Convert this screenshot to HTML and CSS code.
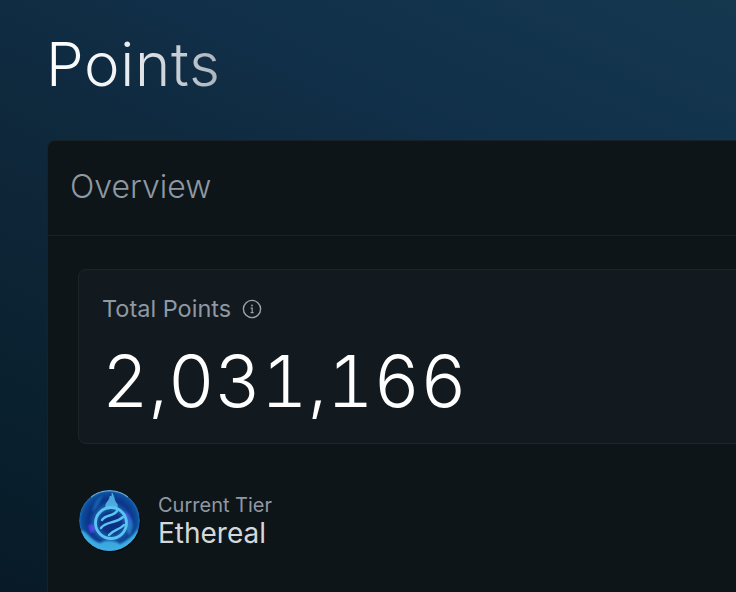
FILE: index.html
```html
<!DOCTYPE html>
<html lang="en">
<head>
<meta charset="utf-8">
<title>Points</title>
<link rel="stylesheet" href="styles.css">
</head>
<body>
<main class="page">
  <h1 class="title">Points</h1>
  <section class="card">
    <header class="card-head">Overview</header>
    <div class="card-body">
      <div class="total">
        <div class="total-label">
          <span>Total Points</span>
          <svg class="info" viewBox="0 0 20 20" width="20" height="20" fill="none" stroke="currentColor" aria-hidden="true">
            <circle cx="10" cy="10" r="8.6" stroke-width="1.4"/>
            <path d="M8.6 9.2H10.2V13.6M8.6 13.7H11.6" stroke-width="1.2"/>
            <circle cx="10" cy="6.5" r="0.9" fill="currentColor" stroke="none"/>
          </svg>
        </div>
        <div class="total-value">2,031,166</div>
      </div>
      <div class="tier">
        <svg class="orb" viewBox="0 0 62 62" width="62" height="62" aria-hidden="true">
          <defs>
            <radialGradient id="orbFill" cx="50%" cy="50%" r="50%">
              <stop offset="0" stop-color="#0b2f80"/>
              <stop offset="0.7" stop-color="#0b3488"/>
              <stop offset="0.9" stop-color="#0d4c9c"/>
              <stop offset="1" stop-color="#1a6db4"/>
            </radialGradient>
            <filter id="glow" x="-30%" y="-30%" width="160%" height="160%">
              <feGaussianBlur stdDeviation="0.7"/>
            </filter>
            <filter id="halo" x="-30%" y="-30%" width="160%" height="160%">
              <feGaussianBlur stdDeviation="2.4"/>
            </filter>
            <filter id="soft" x="-30%" y="-30%" width="160%" height="160%">
              <feGaussianBlur stdDeviation="1.3"/>
            </filter>
            <clipPath id="orbClip"><circle cx="30.5" cy="30.5" r="30.5"/></clipPath>
          </defs>
          <circle cx="31" cy="31.5" r="30.8" fill="#04080b"/>
          <g clip-path="url(#orbClip)">
            <circle cx="30.5" cy="30.5" r="30.5" fill="url(#orbFill)"/>
            <path d="M2 40C9 42 11 50 21 53C27 49 36 50 41 54C49 50 54 46 60 38C60 52 46 62 31 62C15 62 3 52 2 40Z" fill="#46bdec" opacity="0.85" filter="url(#soft)"/>
            <path d="M50 26C56 32 54 40 50 46L47 38Z" fill="#3ea9e6" opacity="0.5" filter="url(#soft)"/>
            <path d="M45 21L51 25L49 33L44 30Z" fill="#5b3ee6" opacity="0.9" filter="url(#soft)"/>
            <path d="M9 35L15 34L17 41L11 43Z" fill="#5b3ee6" opacity="0.9" filter="url(#soft)"/>
            <path d="M24 5C18 9 14 14 13 22C18 18 20 14 24 5Z" fill="#2f9fe0" opacity="0.45" filter="url(#soft)"/>
            <circle cx="32" cy="33" r="16" fill="none" stroke="#2e9fe6" stroke-width="5" opacity="0.6" filter="url(#halo)"/>
            <g filter="url(#glow)" fill="none" stroke="#5cc4f0" stroke-linecap="round">
              <circle cx="32" cy="33" r="15.5" stroke-width="2.8"/>
              <path d="M27 18C25 13 31 11 31 6C33 8 33 5 33 3C36 8 35 11 38 14C39 16 38 18 37 19L33 16L30 19Z" fill="#5cc4f0" fill-opacity="0.8" stroke-width="0.5"/>
              <path d="M23 30C27 24 34 27 38 21" stroke-width="2.4"/>
              <path d="M22 38C27 31 36 34 44 27" stroke-width="2.4"/>
              <path d="M30 45C34 40 40 40 45 35" stroke-width="2.4"/>
            </g>
            <path d="M12 7A30 30 0 0 1 49 7" fill="none" stroke="#c6ecfa" stroke-width="1.2" opacity="0.5" filter="url(#glow)"/>
          </g>
        </svg>
        <div class="tier-text">
          <div class="tier-label">Current Tier</div>
          <div class="tier-name">Ethereal</div>
        </div>
      </div>
    </div>
  </section>
</main>
</body>
</html>
```
FILE: styles.css
```css
* { box-sizing: border-box; }
html, body { margin: 0; height: 100%; }
body {
  overflow: hidden;
  background: linear-gradient(205deg, #15384f 0%, #11304a 25%, #0e2638 55%, #09202e 80%, #081a27 100%);
  font-family: Inter, "Liberation Sans", sans-serif;
}
.page { width: 1100px; padding: 28px 0 0 47px; }
.title {
  margin: 0 0 40px -1px;
  width: max-content;
  font-size: 60px;
  line-height: 72px;
  font-weight: 300;
  letter-spacing: 0.7px;
  background: linear-gradient(90deg, #ffffff 0%, #f2f3f5 40%, #a9b3bc 100%);
  -webkit-background-clip: text;
  background-clip: text;
  color: transparent;
}
.card {
  background: #0d1518;
  border: 1px solid #182226;
  border-radius: 8px;
  height: 600px;
}
.card-head {
  height: 95px;
  padding: 0 0 3px 22px;
  display: flex;
  align-items: center;
  border-bottom: 1px solid #182328;
  color: #8f98a3;
  font-size: 32px;
  font-weight: 300;
}
.card-body { padding: 33px 0 0 30px; }
.total {
  height: 175px;
  padding: 24px 0 0 23px;
  background: #121a1f;
  border: 1px solid #1a262b;
  border-radius: 8px;
}
.total-label {
  display: flex;
  align-items: center;
  gap: 11px;
  color: #8f98a3;
  font-size: 23.5px;
  line-height: 30px;
}
.info { color: #9aa3ad; }
.total-value {
  margin-top: 15px;
  color: #fff;
  font-size: 72px;
  line-height: 84px;
  font-weight: 300;
  letter-spacing: 0;
  font-feature-settings: "tnum";
}
.tier { display: flex; align-items: center; gap: 17px; margin-top: 46px; padding-left: 1px; }
.orb { flex: none; }
.tier-label { color: #8f98a3; font-size: 20px; line-height: 24px; }
.tier-name { color: #d4d8dc; font-size: 28px; line-height: 32px; font-weight: 400; }
```
